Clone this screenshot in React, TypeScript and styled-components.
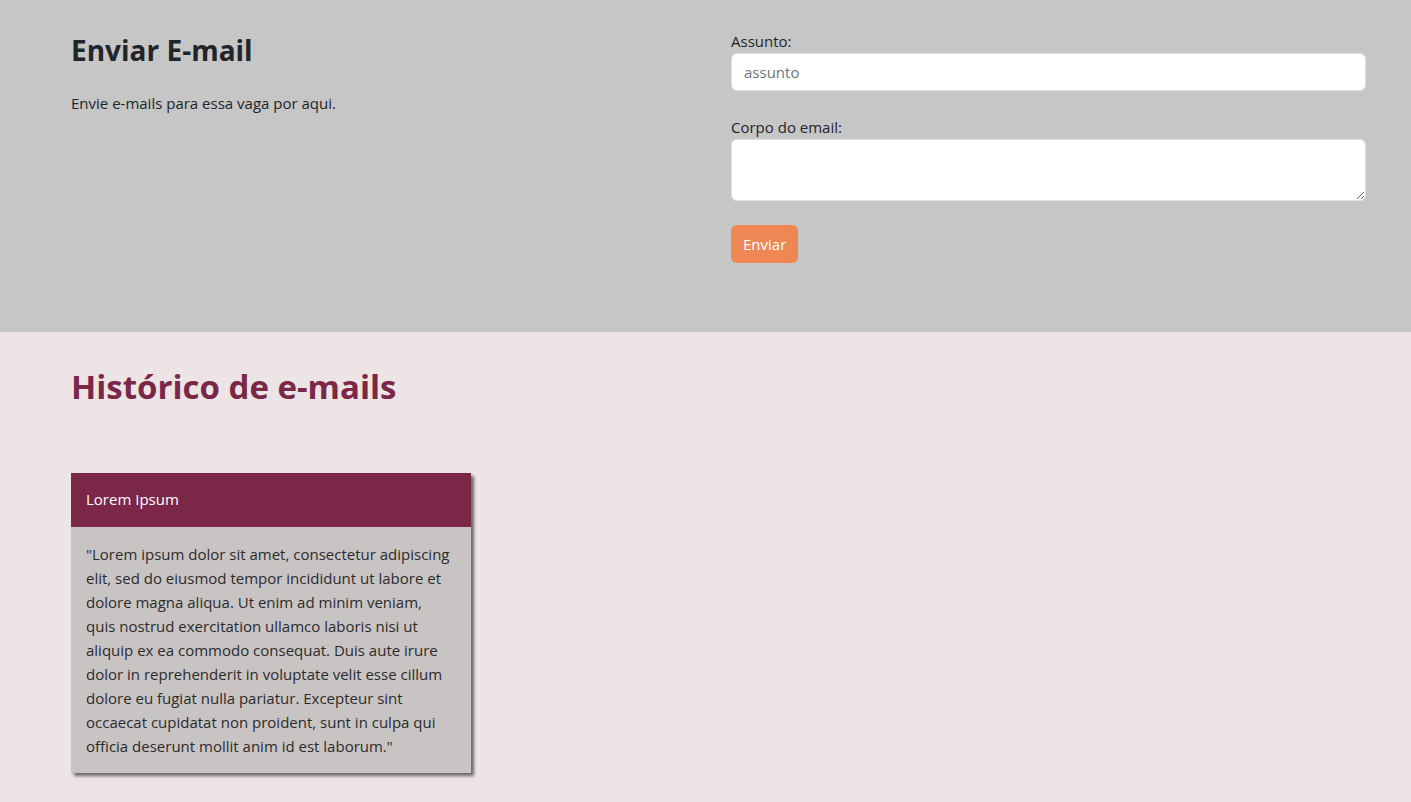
import styled, { createGlobalStyle } from "styled-components";

const GlobalStyle = createGlobalStyle`
  html, body {
    margin: 0;
    padding: 0;
  }
  body {
    font-family: "Open Sans", "Noto Sans", "Liberation Sans", sans-serif;
    font-size: 15px;
    line-height: 1.5;
    color: #212529;
    background: #ede4e5;
  }
  * {
    box-sizing: border-box;
  }
`;

const SendSection = styled.section`
  background-color: #c6c6c6;
  height: 332px;
  padding: 30px 45px 0 71px;
`;

const Row = styled.div`
  display: grid;
  grid-template-columns: 636px 635px;
  column-gap: 24px;
`;

const Intro = styled.div`
  padding-top: 4px;
`;

const Title = styled.h2`
  margin: 0 0 24px;
  font-size: 28px;
  font-weight: 700;
  line-height: 1.2;
  color: #212529;
`;

const Text = styled.p`
  margin: 0;
`;

const Form = styled.form`
  display: flex;
  flex-direction: column;
`;

const Field = styled.div<{ $gap: number }>`
  display: flex;
  flex-direction: column;
  margin-bottom: ${({ $gap }) => $gap}px;
`;

const Label = styled.label`
  line-height: 23px;
`;

const Input = styled.input`
  height: 38px;
  padding: 6px 12px;
  font: inherit;
  font-size: 15px;
  border: 1px solid #dee2e6;
  border-radius: 6px;
  background: #fff;
  color: #212529;

  &::placeholder {
    color: #6c757d;
  }
`;

const TextArea = styled.textarea`
  height: 62px;
  padding: 6px 12px;
  font: inherit;
  border: 1px solid #dee2e6;
  border-radius: 6px;
  background: #fff;
  resize: vertical;
`;

const Button = styled.button`
  align-self: flex-start;
  height: 38px;
  padding: 0 12px;
  font: inherit;
  font-size: 15px;
  color: #fff;
  background-color: #ee8753;
  border: none;
  border-radius: 6px;
`;

const HistorySection = styled.section`
  padding: 35px 71px 40px;
`;

const HistoryTitle = styled.h2`
  margin: 0 0 66px;
  font-size: 33px;
  font-weight: 700;
  line-height: 1.2;
  color: #7b2848;
`;

const Card = styled.article`
  width: 400px;
  background-color: #c9c4c4;
  box-shadow: 3px 3px 3px #6e6868;
`;

const CardHeader = styled.header`
  height: 54px;
  display: flex;
  align-items: center;
  padding: 0 15px;
  background-color: #7b2848;
  color: #fff;
`;

const CardBody = styled.p`
  margin: 0;
  padding: 15px 19px 15px 15px;
  line-height: 24px;
  color: #2b2b2b;
`;

const emails = [
  {
    subject: "Lorem Ipsum",
    body:
      '"Lorem ipsum dolor sit amet, consectetur adipiscing elit, sed do eiusmod tempor incididunt ut labore et dolore magna aliqua. Ut enim ad minim veniam, quis nostrud exercitation ullamco laboris nisi ut aliquip ex ea commodo consequat. Duis aute irure dolor in reprehenderit in voluptate velit esse cillum dolore eu fugiat nulla pariatur. Excepteur sint occaecat cupidatat non proident, sunt in culpa qui officia deserunt mollit anim id est laborum."',
  },
];

export default function App() {
  return (
    <>
      <GlobalStyle />
      <SendSection>
        <Row>
          <Intro>
            <Title>Enviar E-mail</Title>
            <Text>Envie e-mails para essa vaga por aqui.</Text>
          </Intro>
          <Form onSubmit={(e) => e.preventDefault()}>
            <Field $gap={25}>
              <Label htmlFor="assunto">Assunto:</Label>
              <Input id="assunto" placeholder="assunto" />
            </Field>
            <Field $gap={24}>
              <Label htmlFor="corpo">Corpo do email:</Label>
              <TextArea id="corpo" />
            </Field>
            <Button type="submit">Enviar</Button>
          </Form>
        </Row>
      </SendSection>
      <HistorySection>
        <HistoryTitle>Histórico de e-mails</HistoryTitle>
        {emails.map((email) => (
          <Card key={email.subject}>
            <CardHeader>{email.subject}</CardHeader>
            <CardBody>{email.body}</CardBody>
          </Card>
        ))}
      </HistorySection>
    </>
  );
}
